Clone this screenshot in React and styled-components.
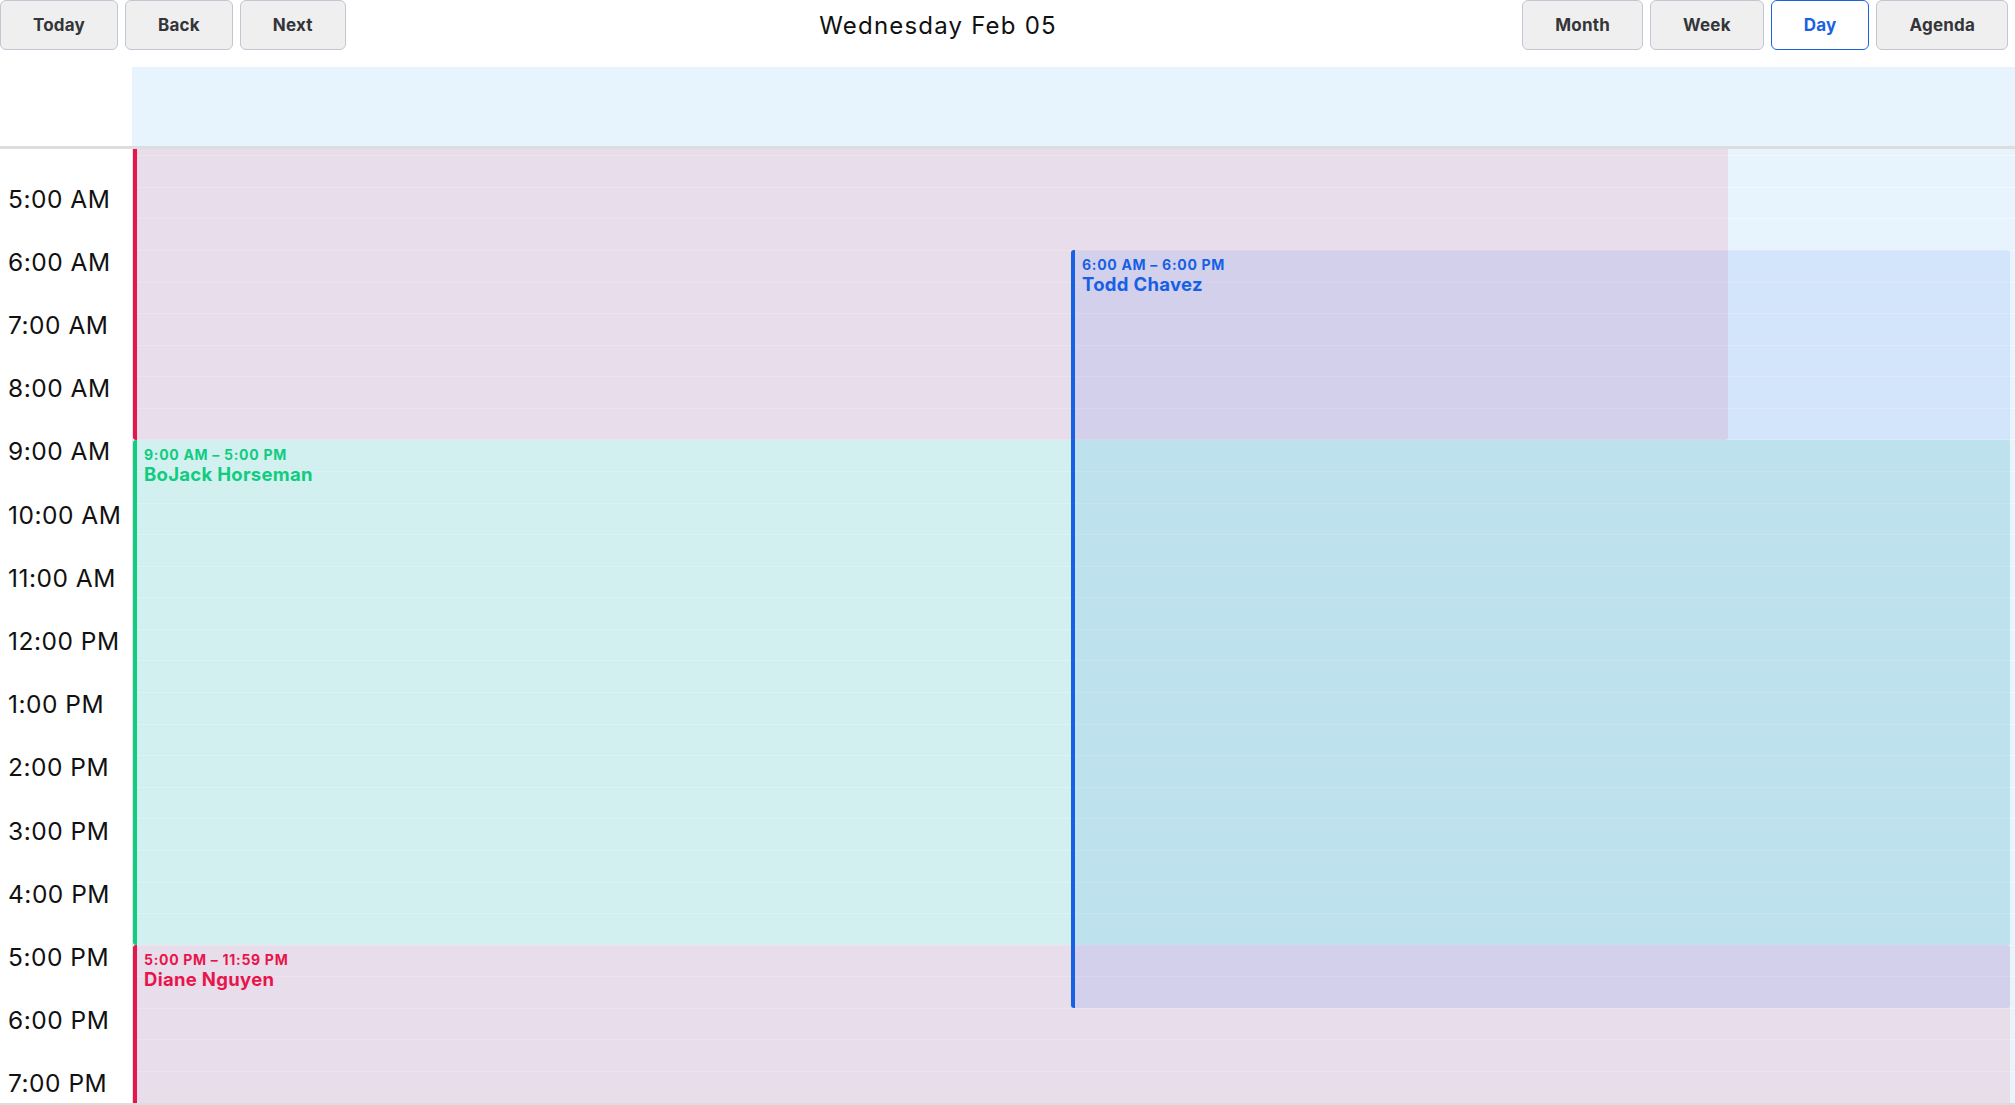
import React from 'react';
import styled, { createGlobalStyle } from 'styled-components';

const HOUR = 63.18;
const FIRST_HOUR = 5;
const LAST_HOUR = 19;
const LEAD = 37.8; // visible part of the 4 AM hour above 5:00 AM
const LEAD_TOP = LEAD - HOUR / 2; // visible part of the 4:00 slot

const Global = createGlobalStyle`
  html, body { margin: 0; padding: 0; background: #fff; }
  body { font-family: Inter, "Liberation Sans", sans-serif; color: #111; }
  * { box-sizing: border-box; }
`;

const Page = styled.div`
  width: 2015px;
  height: 1105px;
  display: flex;
  flex-direction: column;
  overflow: hidden;
`;

const Toolbar = styled.div`
  display: flex;
  align-items: center;
  height: 50px;
  margin-bottom: 17px;
  padding-right: 7px;
`;

const ButtonGroup = styled.div`
  display: flex;
  gap: 7px;
`;

const ToolButton = styled.button`
  height: 50px;
  padding: 0 32px;
  border-radius: 6px;
  border: 1px solid ${(p) => (p.$active ? '#1a62e0' : '#c2c6d2')};
  background: ${(p) => (p.$active ? '#ffffff' : '#efefef')};
  color: ${(p) => (p.$active ? '#1a62e0' : '#333538')};
  font-family: Inter, "Liberation Sans", sans-serif;
  font-weight: 700;
  font-size: 17px;
  letter-spacing: 0.2px;
  cursor: pointer;
`;

const Title = styled.div`
  flex: 1;
  text-align: center;
  font-size: 24px;
  letter-spacing: 1.2px;
  color: #111;
  padding-left: 8px;
`;

const Header = styled.div`
  display: flex;
  height: 82px;
  border-bottom: 3px solid #dddddd;
`;

const HeaderGutter = styled.div`
  width: 132px;
  background: #fff;
`;

const HeaderCell = styled.div`
  flex: 1;
  background: #e8f4fd;
`;

const Body = styled.div`
  flex: 1;
  overflow: hidden;
  border-bottom: 2px solid #dddddd;
`;

const Content = styled.div`
  display: flex;
`;

const Gutter = styled.div`
  width: 132px;
  flex: none;
  background: #fff;
  padding-top: ${LEAD}px;
`;

const HourLabel = styled.div`
  height: ${HOUR}px;
  padding-left: 8px;
  font-size: 24.5px;
  line-height: 24px;
  letter-spacing: 0.5px;
  color: #111;
`;

const DayColumn = styled.div`
  flex: 1;
  position: relative;
  background: #e8f4fd;
  border-left: 1px solid #e4e4e4;
`;

const LeadSlot = styled.div`
  height: ${LEAD_TOP}px;
`;

const Slot = styled.div`
  height: ${HOUR / 2}px;
  border-top: 1px solid #f3f8fd;
`;

const Event = styled.div`
  position: absolute;
  border-left: 4px solid ${(p) => p.$color};
  border-radius: 3px;
  background: ${(p) => p.$bg};
  color: ${(p) => p.$color};
  padding: 7px 7px;
  overflow: hidden;
`;

const EventTime = styled.div`
  font-size: 14px;
  line-height: 16px;
  font-weight: 700;
  letter-spacing: 0.7px;
`;

const EventName = styled.div`
  font-size: 18.5px;
  line-height: 22px;
  font-weight: 700;
  letter-spacing: 0.3px;
`;

const hours = [];
for (let h = FIRST_HOUR; h <= LAST_HOUR; h++) hours.push(h);

const fmt = (h) => {
  const suffix = h < 12 ? 'AM' : 'PM';
  const hh = h % 12 === 0 ? 12 : h % 12;
  return `${hh}:00 ${suffix}`;
};

const COLORS = {
  red: { color: '#e8154d', bg: 'rgba(232, 21, 77, 0.1)' },
  green: { color: '#10cc80', bg: 'rgba(16, 204, 128, 0.1)' },
  blue: { color: '#1660e6', bg: 'rgba(22, 96, 230, 0.1)' },
};

const COL_W = 1882;

const events = [
  { id: 1, start: 0, end: 9, left: 0, right: 1595, tone: 'red', time: '', name: '' },
  { id: 2, start: 9, end: 17, left: 0, right: 1877, tone: 'green', time: '9:00 AM – 5:00 PM', name: 'BoJack Horseman' },
  { id: 3, start: 17, end: 23.98, left: 0, right: 1877, tone: 'red', time: '5:00 PM – 11:59 PM', name: 'Diane Nguyen' },
  { id: 4, start: 6, end: 18, left: 938, right: 1877, tone: 'blue', time: '6:00 AM – 6:00 PM', name: 'Todd Chavez' },
];

export default function App() {
  return (
    <Page>
      <Global />
      <Toolbar>
        <ButtonGroup>
          <ToolButton>Today</ToolButton>
          <ToolButton>Back</ToolButton>
          <ToolButton>Next</ToolButton>
        </ButtonGroup>
        <Title>Wednesday Feb 05</Title>
        <ButtonGroup>
          <ToolButton>Month</ToolButton>
          <ToolButton>Week</ToolButton>
          <ToolButton $active>Day</ToolButton>
          <ToolButton>Agenda</ToolButton>
        </ButtonGroup>
      </Toolbar>
      <Header>
        <HeaderGutter />
        <HeaderCell />
      </Header>
      <Body>
        <Content>
          <Gutter>
            {hours.map((h) => (
              <HourLabel key={h}>{fmt(h)}</HourLabel>
            ))}
          </Gutter>
          <DayColumn>
            <LeadSlot />
            <Slot />
            {hours.map((h) => (
              <React.Fragment key={h}>
                <Slot />
                <Slot />
              </React.Fragment>
            ))}
            {events.map((e) => {
              const c = COLORS[e.tone];
              return (
                <Event
                  key={e.id}
                  $color={c.color}
                  $bg={c.bg}
                  style={{
                    top: LEAD + (e.start - FIRST_HOUR) * HOUR,
                    height: (e.end - e.start) * HOUR,
                    left: `${(e.left / COL_W) * 100}%`,
                    width: `${((e.right - e.left) / COL_W) * 100}%`,
                  }}
                >
                  {e.time && <EventTime>{e.time}</EventTime>}
                  {e.name && <EventName>{e.name}</EventName>}
                </Event>
              );
            })}
          </DayColumn>
        </Content>
      </Body>
    </Page>
  );
}
